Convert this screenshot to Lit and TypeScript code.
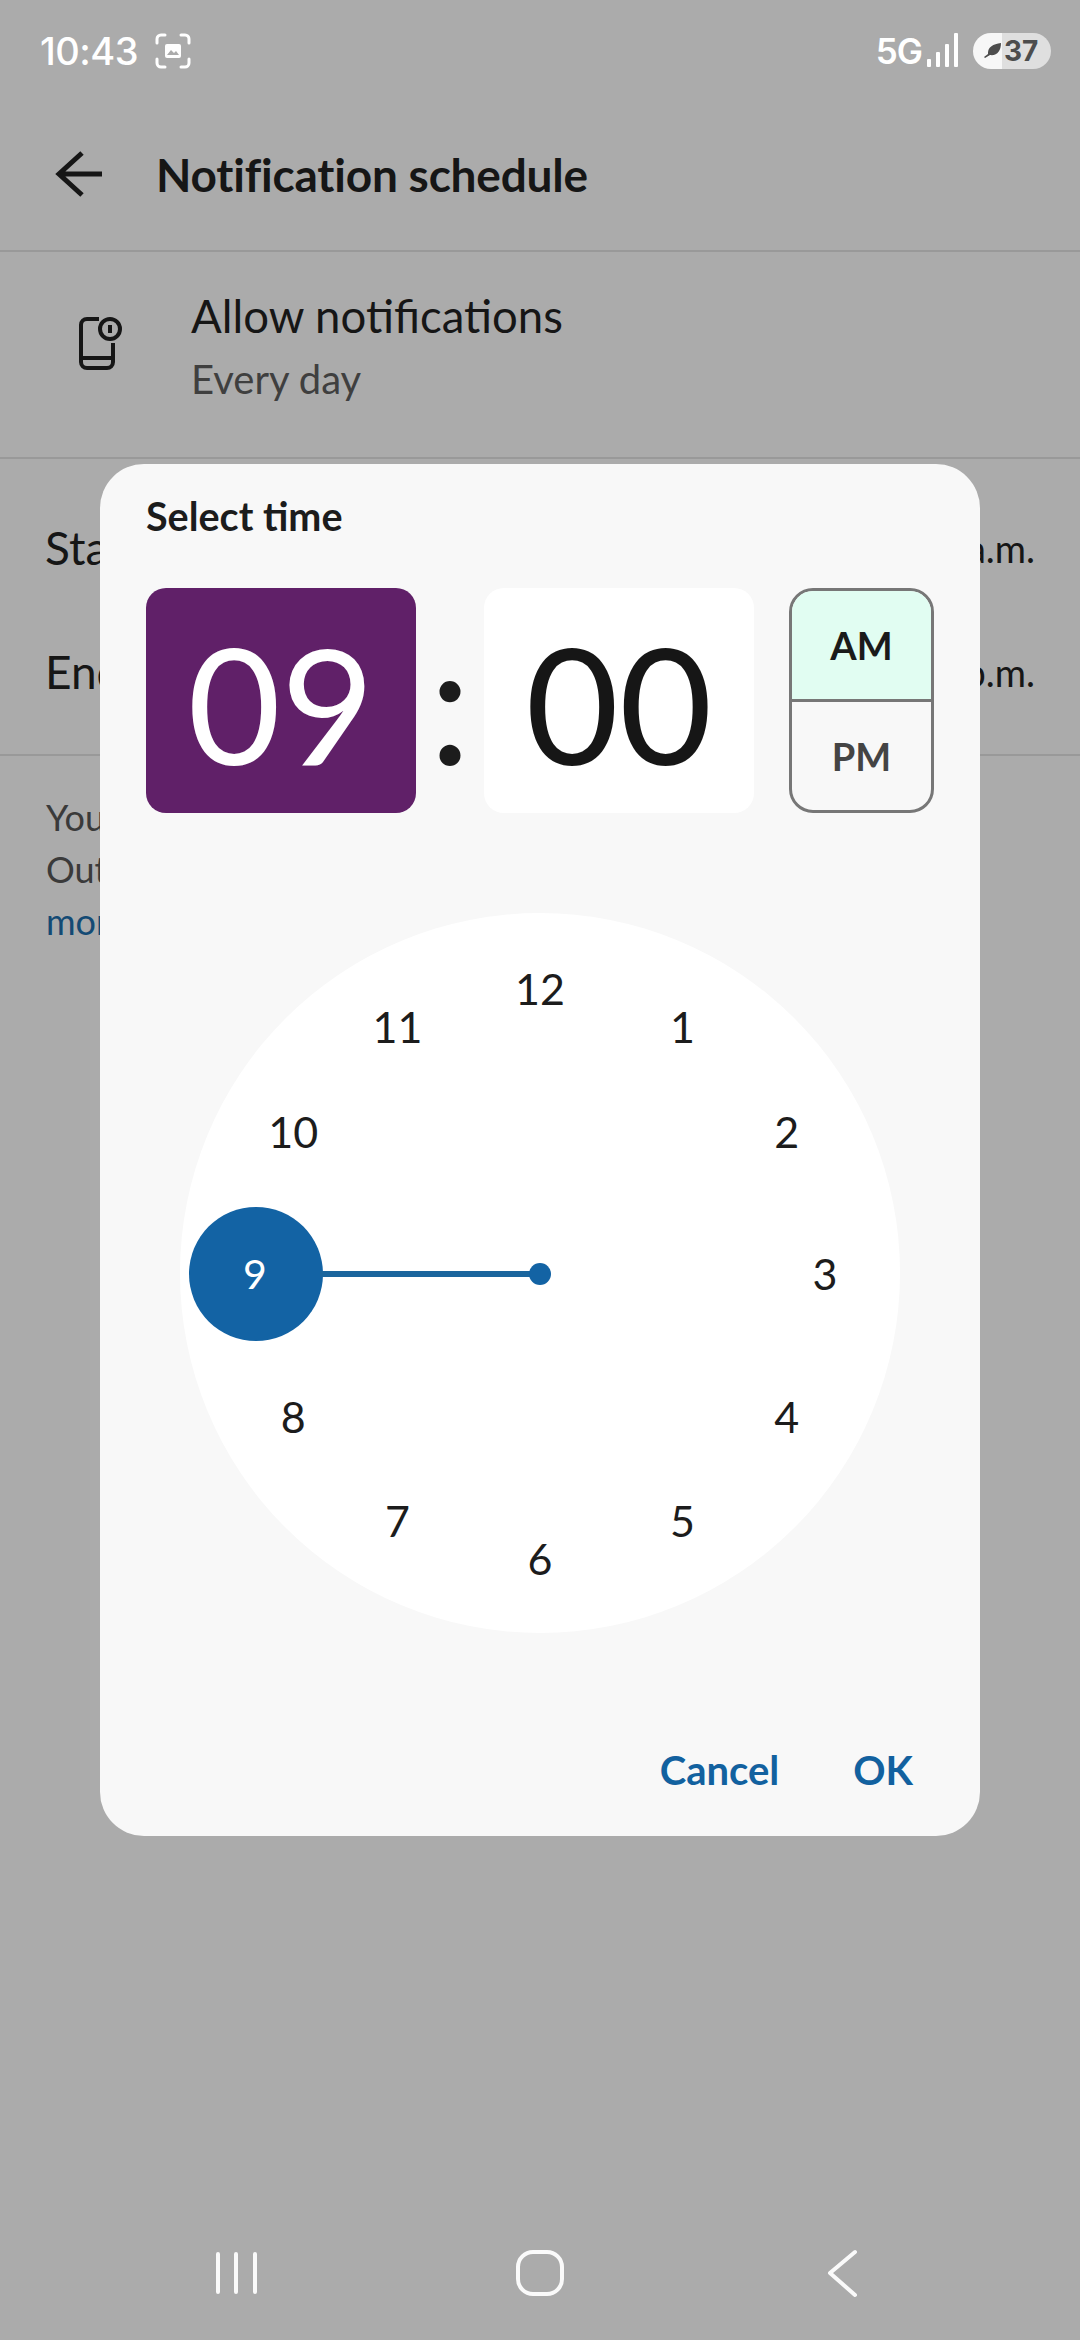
import { LitElement, html, css, svg } from 'lit';
import { customElement } from 'lit/decorators.js';

const HOURS = [12, 1, 2, 3, 4, 5, 6, 7, 8, 9, 10, 11];
const CLOCK_RADIUS = 360;
const NUMBER_RADIUS = 285;

@customElement('app-root')
export class AppRoot extends LitElement {
  static styles = css`
    :host {
      display: block;
      position: relative;
      width: 1080px;
      height: 2340px;
      overflow: hidden;
      background: #ababab;
      color: #161616;
      font-family: Lato, 'Liberation Sans', sans-serif;
    }

    .status {
      height: 104px;
      box-sizing: border-box;
      padding: 33px 29px 0 40px;
      display: flex;
      align-items: flex-start;
      justify-content: space-between;
      color: #fff;
      font-family: Inter, 'Liberation Sans', sans-serif;
      font-weight: 500;
    }

    .status-left,
    .status-right {
      display: flex;
      align-items: center;
      height: 36px;
    }

    .clock-text {
      font-size: 38px;
      line-height: 36px;
      margin-right: 17px;
      letter-spacing: -0.5px;
    }

    .net {
      font-size: 35px;
      font-weight: 600;
      line-height: 36px;
      margin-right: 5px;
      letter-spacing: -1px;
    }

    .battery {
      display: flex;
      align-items: center;
      width: 78px;
      height: 36px;
      margin-left: 14px;
      border-radius: 18px;
      overflow: hidden;
      background: linear-gradient(90deg, #f7f7f7 0 29px, #dfdfdf 29px);
      color: #4d4d4d;
      font-size: 28px;
      font-weight: 700;
    }

    .battery svg {
      margin-left: 10px;
      margin-right: 3px;
    }

    .header {
      height: 148px;
      box-sizing: border-box;
      display: flex;
      align-items: center;
      padding: 0 0 6px 54px;
      border-bottom: 2px solid #999;
    }

    .header h1 {
      margin: 0 0 0 54px;
      font-size: 46px;
      letter-spacing: -0.2px;
      font-weight: 700;
    }

    .allow {
      height: 207px;
      box-sizing: border-box;
      display: flex;
      padding: 38px 0 0 78px;
      border-bottom: 2px solid #999;
    }

    .allow svg {
      margin-top: 26px;
    }

    .allow-text {
      margin-left: 69px;
    }

    .allow-title {
      font-size: 45.5px;
      line-height: 52px;
    }

    .allow-sub {
      margin-top: 14px;
      font-size: 40px;
      line-height: 46px;
      color: #3f3f3f;
    }

    .times {
      height: 297px;
      box-sizing: border-box;
      padding: 60px 45px 0 45px;
      border-bottom: 2px solid #999;
      font-size: 46px;
    }

    .time-row {
      display: flex;
      justify-content: space-between;
      height: 124px;
      line-height: 58px;
    }

    .time-row span:last-child {
      font-size: 38px;
    }

    .note {
      padding: 35px 46px 0;
      font-size: 36px;
      line-height: 52px;
      color: #3a3a3a;
    }

    .note a {
      color: #134a74;
      display: block;
    }

    .nav {
      position: absolute;
      left: 0;
      top: 2230px;
    }

    .dialog {
      position: absolute;
      left: 100px;
      top: 464px;
      width: 880px;
      height: 1372px;
      box-sizing: border-box;
      padding: 28px 46px 0;
      border-radius: 44px;
      background: #f8f8f8;
    }

    .dialog h2 {
      margin: 0;
      font-size: 39.5px;
      line-height: 48px;
      font-weight: 700;
      color: #1c1c1c;
    }

    .time-inputs {
      display: flex;
      margin-top: 48px;
      height: 225px;
    }

    .field {
      width: 270px;
      border-radius: 20px;
      background: #fff;
      font-size: 161px;
      line-height: 229px;
      text-align: center;
    }

    .field.active {
      background: #602068;
      color: #fff;
    }

    .colon {
      width: 68px;
      text-align: center;
      font-size: 168px;
      line-height: 225px;
      font-weight: 400;
      color: #1c1c1c;
    }

    .ampm {
      width: 145px;
      margin-left: 35px;
      box-sizing: border-box;
      border: 3px solid #777;
      border-radius: 24px;
      overflow: hidden;
      display: flex;
      flex-direction: column;
      font-size: 38px;
      font-weight: 700;
      text-align: center;
    }

    .ampm div {
      flex: 1;
      display: flex;
      align-items: center;
      justify-content: center;
    }

    .ampm .on {
      background: #e1fdf2;
      border-bottom: 3px solid #777;
      color: #1a1a1a;
    }

    .ampm .off {
      color: #444;
    }

    .dial {
      position: relative;
      width: 720px;
      height: 720px;
      margin: 100px 0 0 34px;
      border-radius: 50%;
      background: #fff;
      font-size: 43px;
      color: #1c1c1c;
    }

    .num {
      position: absolute;
      width: 80px;
      height: 60px;
      line-height: 60px;
      text-align: center;
      transform: translate(-50%, -50%);
    }

    .num.selected {
      color: #fff;
      font-size: 41px;
    }

    .hand {
      position: absolute;
      left: 0;
      top: 0;
    }

    .actions {
      display: flex;
      justify-content: flex-end;
      gap: 74px;
      margin-top: 110px;
      padding-right: 21px;
      font-size: 40px;
      line-height: 54px;
      font-weight: 700;
      color: #12619f;
    }
  `;

  private renderDial() {
    return html`
      <div class="dial">
        <svg class="hand" width="720" height="720" viewBox="0 0 720 720">
          <circle cx="76" cy="361" r="67" fill="#1363a4"></circle>
          <rect x="140" y="358" width="220" height="6" fill="#1a659d"></rect>
          <circle cx="360" cy="361" r="11" fill="#1363a4"></circle>
        </svg>
        ${HOURS.map((h, i) => {
          const a = (i * Math.PI) / 6;
          const x = CLOCK_RADIUS + NUMBER_RADIUS * Math.sin(a);
          const y = CLOCK_RADIUS + 1 - NUMBER_RADIUS * Math.cos(a);
          return html`<span
            class="num ${h === 9 ? 'selected' : ''}"
            style="left:${x}px;top:${y}px"
            >${h}</span
          >`;
        })}
      </div>
    `;
  }

  private renderNav() {
    return svg`
      <g fill="none" stroke="#fafafa" stroke-width="4" stroke-linecap="round" stroke-linejoin="round">
        <path d="M218 24V62M236 24V62M255 24V62"></path>
        <rect x="518" y="22" width="44" height="42" rx="15"></rect>
        <path d="M855 22L830 43L855 65"></path>
      </g>
    `;
  }

  render() {
    return html`
      <div class="status">
        <div class="status-left">
          <span class="clock-text">10:43</span>
          <svg width="36" height="36" viewBox="0 0 36 36" fill="none" stroke="#fff" stroke-width="3" stroke-linecap="round">
            <path d="M2 10V6a4 4 0 0 1 4-4h4M26 2h4a4 4 0 0 1 4 4v4M34 26v4a4 4 0 0 1-4 4h-4M10 34H6a4 4 0 0 1-4-4v-4"></path>
            <rect x="10" y="11" width="16" height="14" rx="2" fill="#fff" stroke="none"></rect>
            <path d="M12 22l4-5 3 3 2-2 3 4z" fill="#ababab" stroke="none"></path>
          </svg>
        </div>
        <div class="status-right">
          <span class="net">5G</span>
          <svg width="32" height="36" viewBox="0 0 32 36" fill="#fff">
            <rect x="0" y="26" width="4" height="8" rx="1"></rect>
            <rect x="9" y="19" width="4" height="15" rx="1"></rect>
            <rect x="18" y="11" width="4" height="23" rx="1"></rect>
            <rect x="27" y="0" width="4" height="34" rx="1"></rect>
          </svg>
          <div class="battery">
            <svg width="18" height="18" viewBox="0 0 18 18" fill="#4d4d4d">
              <path d="M5 11C5 5 10 2 18 1C18 9 14 14 7 13L2 16L1 15L5 12z"></path>
            </svg>
            <span>37</span>
          </div>
        </div>
      </div>

      <div class="header">
        <svg width="48" height="46" viewBox="0 0 48 46" fill="none" stroke="#161616" stroke-width="5">
          <path d="M28 2L5 23L28 44M5 23H48"></path>
        </svg>
        <h1>Notification schedule</h1>
      </div>

      <div class="allow">
        <svg width="44" height="54" viewBox="0 0 44 54" fill="none" stroke="#161616" stroke-width="4">
          <path d="M21 3H9a6 6 0 0 0-6 6v37a6 6 0 0 0 6 6h20a6 6 0 0 0 6-6V27M3 42H35"></path>
          <circle cx="32" cy="13" r="10"></circle>
          <path d="M32 9V17"></path>
        </svg>
        <div class="allow-text">
          <div class="allow-title">Allow notifications</div>
          <div class="allow-sub">Every day</div>
        </div>
      </div>

      <div class="times">
        <div class="time-row"><span>Start time</span><span>9:00 a.m.</span></div>
        <div class="time-row"><span>End time</span><span>9:00 p.m.</span></div>
      </div>

      <div class="note">
        You will get notifications during this time.<br />
        Outside of these hours they stay silent.
        <a>more info</a>
      </div>

      <svg class="nav" width="1080" height="110" viewBox="0 0 1080 110">${this.renderNav()}</svg>

      <div class="dialog">
        <h2>Select time</h2>
        <div class="time-inputs">
          <div class="field active">09</div>
          <div class="colon">:</div>
          <div class="field">00</div>
          <div class="ampm">
            <div class="on">AM</div>
            <div class="off">PM</div>
          </div>
        </div>
        ${this.renderDial()}
        <div class="actions"><span>Cancel</span><span>OK</span></div>
      </div>
    `;
  }
}
